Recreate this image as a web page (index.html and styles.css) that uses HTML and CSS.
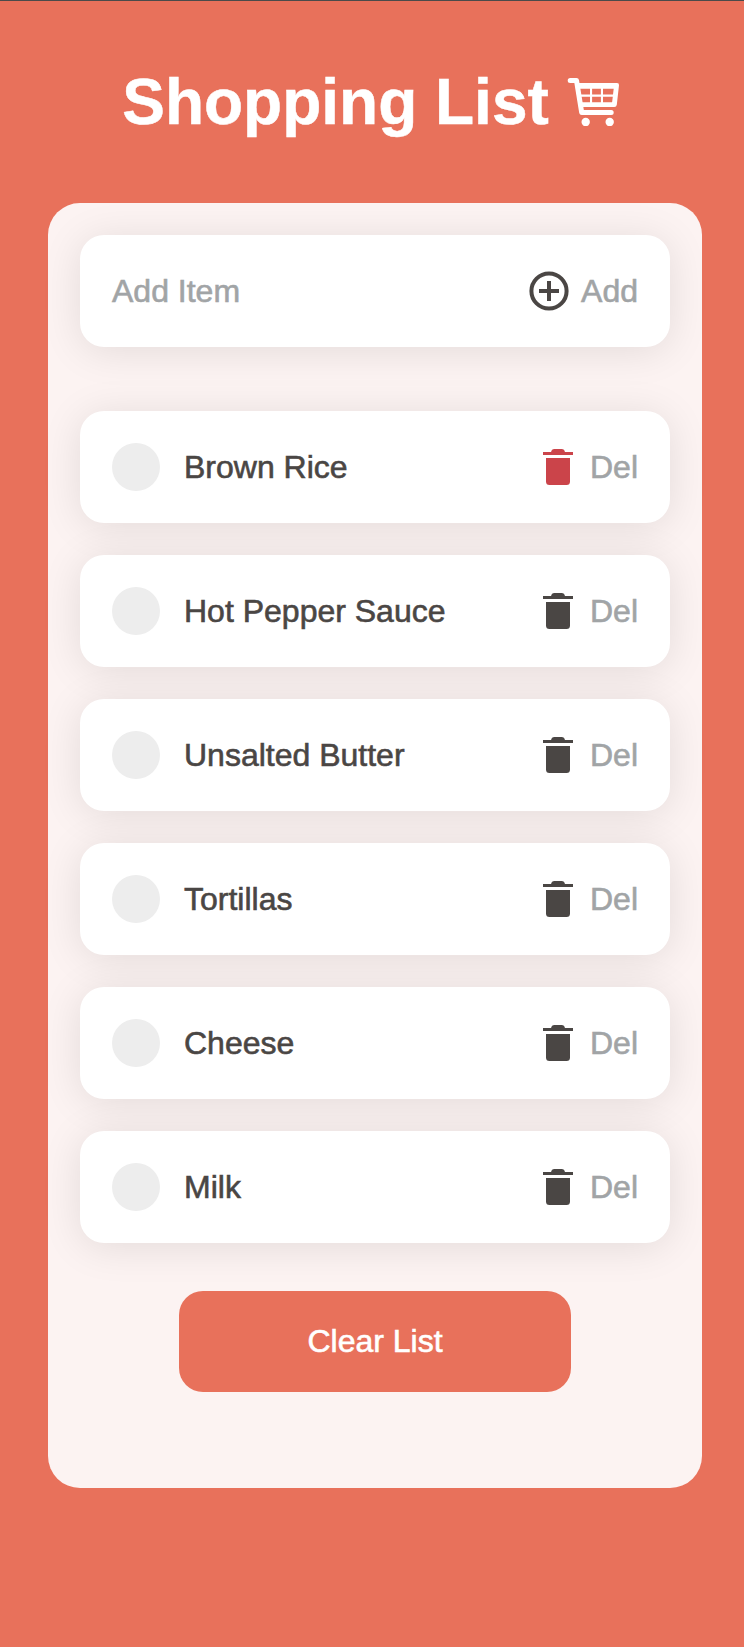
FILE: index.html
```html
<!DOCTYPE html>
<html lang="en">
<head>
<meta charset="utf-8">
<title>Shopping List</title>
<link rel="stylesheet" href="styles.css">
</head>
<body>
<svg class="sprite" aria-hidden="true">
  <symbol id="trash" viewBox="0 0 48 48">
    <path d="M9 9h8q.5-2.800 3-3h8q2.500.2 3 3h8v3H9zM12 15h24v23.500Q36 42 32.500 42h-17Q12 42 12 38.500z"/>
  </symbol>
</svg>
<header class="header">
  <h1 class="title">Shopping List
    <svg class="cart" viewBox="0 0 54 50">
      <path class="cart-line" d="M4.200 4.500H10.500L15.700 36.500H45.200"/>
      <path fill-rule="evenodd" d="M9 7H51Q53.200 7 53 9.300L50.800 28.700Q50.500 31 48.300 31H13zM13.300 12.700L14.200 18.500H24V12.700zM26.100 12.700V18.500H34.900V12.700zM37 12.700V18.500H47L47.700 12.700zM14.800 20.700L15.700 26.200H24V20.700zM26.100 20.700V26.200H34.900V20.700zM37 20.700V26.200H46.100L46.800 20.700z"/>
      <circle cx="19.700" cy="46" r="4.200"/>
      <circle cx="43.700" cy="46" r="4.200"/>
    </svg>
  </h1>
</header>
<main class="panel">
  <form class="card add-card">
    <span class="muted grow">Add Item</span>
    <svg class="icon" viewBox="0 0 48 48"><circle class="ring" cx="24" cy="24" r="17.600"/><path d="M22 14h4v8h8v4h-8v8h-4v-8h-8v-4h8z"/></svg>
    <span class="muted">Add</span>
  </form>
  <ul class="list">
    <li class="card"><span class="check"></span><span class="grow">Brown Rice</span><svg class="icon icon-active"><use href="#trash"/></svg><span class="muted">Del</span></li>
    <li class="card"><span class="check"></span><span class="grow">Hot Pepper Sauce</span><svg class="icon"><use href="#trash"/></svg><span class="muted">Del</span></li>
    <li class="card"><span class="check"></span><span class="grow">Unsalted Butter</span><svg class="icon"><use href="#trash"/></svg><span class="muted">Del</span></li>
    <li class="card"><span class="check"></span><span class="grow">Tortillas</span><svg class="icon"><use href="#trash"/></svg><span class="muted">Del</span></li>
    <li class="card"><span class="check"></span><span class="grow">Cheese</span><svg class="icon"><use href="#trash"/></svg><span class="muted">Del</span></li>
    <li class="card"><span class="check"></span><span class="grow">Milk</span><svg class="icon"><use href="#trash"/></svg><span class="muted">Del</span></li>
  </ul>
  <button class="clear" type="button">Clear List</button>
</main>
</body>
</html>
```

FILE: styles.css
```css
* { box-sizing: border-box; }
body {
  margin: 0;
  min-height: 1647px;
  padding: 0 42px 0 48px;
  border-top: 1px solid #4a4a4a;
  background: #e8715b;
  color: #4a4644;
  font-family: "Liberation Sans", Arial, sans-serif;
  font-size: 32px;
  line-height: 36px;
}
.sprite { display: none; }
.header { height: 202px; padding-top: 64px; }
.title {
  display: flex;
  justify-content: center;
  gap: 17px;
  margin: 0;
  padding-right: 8px;
  color: #fff;
  font-size: 64px;
  line-height: 74px;
  white-space: nowrap;
  -webkit-text-stroke: 0.5px currentColor;
}
.cart { width: 54px; height: 50px; margin-top: 11px; fill: #fff; }
.cart-line {
  fill: none;
  stroke: #fff;
  stroke-width: 5;
  stroke-linecap: round;
  stroke-linejoin: round;
}
.panel {
  height: 1285px;
  padding: 32px;
  border-radius: 32px;
  background: #fcf3f2;
}
.card {
  display: flex;
  align-items: center;
  height: 112px;
  padding: 0 32px;
  border-radius: 24px;
  background: #fff;
  box-shadow: 0 4px 40px rgba(0, 0, 0, 0.1);
  -webkit-text-stroke: 0.6px currentColor;
}
.list {
  display: flex;
  flex-direction: column;
  gap: 32px;
  margin: 64px 0 48px;
  padding: 0;
  list-style: none;
}
.check {
  width: 48px;
  height: 48px;
  margin-right: 24px;
  border-radius: 50%;
  background: #ededed;
}
.grow { flex: 1; }
.muted { color: #a1a4a6; }
.icon { width: 48px; height: 48px; margin-right: 8px; fill: #4a4644; }
.icon-active { fill: #cb444a; }
.ring { fill: none; stroke: #4a4644; stroke-width: 4; }
.clear {
  display: block;
  width: 392px;
  height: 101px;
  margin: 0 auto;
  padding: 0 0 2px;
  border: 0;
  border-radius: 24px;
  background: #e8715b;
  color: #fff;
  font: inherit;
  -webkit-text-stroke: 0.6px currentColor;
}
```
